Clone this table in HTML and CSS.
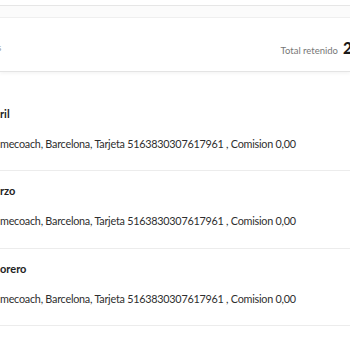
FILE: index.html
```html
<!DOCTYPE html>
<html>
<head>
<meta charset="utf-8">
<link rel="stylesheet" href="styles.css">
</head>
<body>
<div class="page">
  <div class="topbar"></div>
  <div class="band"></div>
  <div class="summary">
    <span class="summary-left">s</span>
    <span class="total"><span class="total-label">Total retenido</span><span class="total-value">2</span></span>
  </div>
  <ul class="list">
    <li class="item">
      <div class="item-title">ril</div>
      <div class="item-desc">mecoach, Barcelona, Tarjeta 5163830307617961 , Comision 0,00</div>
    </li>
    <li class="item">
      <div class="item-title">rzo</div>
      <div class="item-desc">mecoach, Barcelona, Tarjeta 5163830307617961 , Comision 0,00</div>
    </li>
    <li class="item">
      <div class="item-title">orero</div>
      <div class="item-desc">mecoach, Barcelona, Tarjeta 5163830307617961 , Comision 0,00</div>
    </li>
  </ul>
</div>
</body>
</html>
```
FILE: styles.css
```css
html, body {
  margin: 0;
  padding: 0;
  background: #ffffff;
}
body {
  font-family: Lato, "Open Sans", sans-serif;
  color: #333333;
  width: 350px;
  height: 350px;
  overflow: hidden;
}
.page {
  width: 350px;
}
.topbar {
  height: 5px;
  border-bottom: 1px solid #e6e6e6;
  background: #ffffff;
}
.band {
  height: 11px;
  background: #fbfbfb;
  border-bottom: 1px solid #efefef;
}
.summary {
  height: 53px;
  background: #ffffff;
  border-bottom: 1px solid #e4e4e4;
  box-shadow: 0 2px 3px rgba(0,0,0,0.04);
  display: flex;
  align-items: center;
  justify-content: space-between;
  white-space: nowrap;
  overflow: hidden;
}
.summary-left {
  margin-left: -3px;
  font-size: 10px;
  color: #999999;
  padding-top: 5px;
}
.total {
  display: flex;
  align-items: baseline;
  gap: 5px;
  margin-right: -3px;
  padding-top: 5px;
  flex-shrink: 0;
}
.total-label {
  font-size: 9.5px;
  color: #777777;
}
.total-value {
  font-size: 16px;
  font-weight: 900;
  color: #1a1a1a;
  width: 10px;
  flex-shrink: 0;
}
.list {
  list-style: none;
  margin: 0;
  padding: 0;
}
.item {
  height: 78px;
  border-bottom: 1px solid #ececec;
  box-sizing: border-box;
  padding-top: 13px;
  white-space: nowrap;
}
.item:first-child {
  height: 99px;
  padding-top: 35px;
}
.item:last-child {
  height: 77px;
}
.item-title {
  font-size: 11px;
  font-weight: 700;
  color: #222222;
  line-height: 14px;
}
.item-desc {
  margin-top: 15px;
  font-size: 10.8px;
  letter-spacing: -0.24px;
  color: #2e2e2e;
  line-height: 16px;
}
```
